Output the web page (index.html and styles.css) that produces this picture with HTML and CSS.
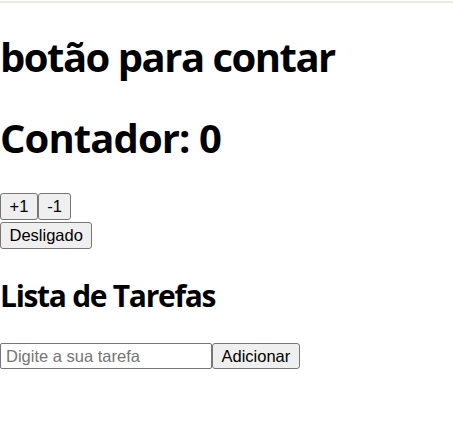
FILE: index.html
```html
<!DOCTYPE html>
<html lang="pt-BR"><head><meta charset="utf-8"><title>Contador</title><link rel="stylesheet" href="styles.css"></head>
<body>
<div class="topbar"></div>
<h1 class="title">botão para contar</h1>
<h1 class="counter">Contador: 0</h1>
<div class="row"><button class="btn">+1</button><button class="btn">-1</button></div>
<div class="row second"><button class="btn">Desligado</button></div>
<h2 class="subtitle">Lista de Tarefas</h2>
<div class="row todo"><input class="task" type="text" placeholder="Digite a sua tarefa"><button class="btn">Adicionar</button></div>
</body></html>
```
FILE: styles.css
```css
html,body{margin:0;padding:0;background:#fff}
body{font-family:"Open Sans","Noto Sans",sans-serif;color:#000}
.topbar{height:2px;margin-top:1px;background:#e8ebdf}
.title,.counter{font-size:40px;font-weight:700;line-height:54px;letter-spacing:-1.5px;margin:27px 0 0}
.counter{margin-bottom:28px;letter-spacing:-0.9px}
.row{display:flex;align-items:stretch}
.second{margin-top:2px}
.btn{font-family:"Liberation Sans",Arial,sans-serif;font-size:16.5px;line-height:19px;height:27px;padding:3px 8.5px;border:1px solid #767676;border-radius:3px;background:#efefef;color:#000;margin:0;box-sizing:border-box}
.subtitle{font-size:30px;font-weight:700;line-height:40px;letter-spacing:-1.3px;margin:27px 0 27px}
.task{font-family:"Liberation Sans",Arial,sans-serif;font-size:16.5px;width:212px;height:26px;box-sizing:border-box;padding:1px 5px;border:1px solid #767676;border-radius:2px;margin:0;color:#000;background:#fff}
.todo .btn{height:26px}
.task::placeholder{color:#757575}
```
